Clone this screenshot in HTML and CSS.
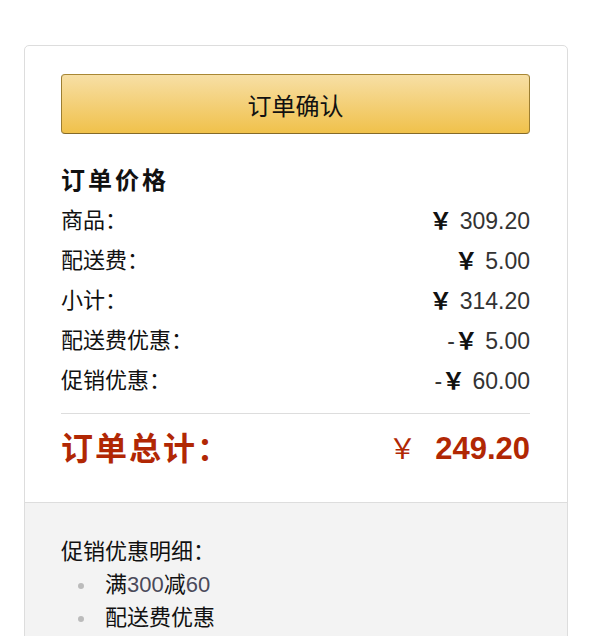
FILE: index.html
```html
<!DOCTYPE html>
<html lang="zh-CN">
<head>
    <meta charset="UTF-8">
    <meta name="viewport" content="width=device-width, initial-scale=1.0">
    <title>订单确认</title>
    <link rel="stylesheet" href="styles.css">
</head>
<body>

    <div class="page">
        <div class="summary">
            <div class="summary-main">
                <button class="confirm-btn">订单确认</button>

                <h3 class="summary-title">订单价格</h3>
                <ul class="price-list">
                    <li><span>商品：</span><span class="amount"><span class="yen">￥</span> 309.20</span></li>
                    <li><span>配送费：</span><span class="amount"><span class="yen">￥</span> 5.00</span></li>
                    <li><span>小计：</span><span class="amount"><span class="yen">￥</span> 314.20</span></li>
                    <li><span>配送费优惠：</span><span class="amount">-<span class="yen">￥</span> 5.00</span></li>
                    <li><span>促销优惠：</span><span class="amount">-<span class="yen">￥</span> 60.00</span></li>
                </ul>

                <div class="grand-total">
                    <span class="total-label">订单总计：</span>
                    <span class="total-amount"><span class="yen">￥</span> 249.20</span>
                </div>
            </div>

            <div class="promo">
                <div class="promo-title">促销优惠明细：</div>
                <ul class="promo-list">
                    <li>满<span class="num">300</span>减<span class="num">60</span></li>
                    <li>配送费优惠</li>
                </ul>
            </div>
        </div>
    </div>

</body>
</html>
```

FILE: styles.css
```css
body {
    font-family: "Liberation Sans", "Noto Sans CJK SC", sans-serif;
    background-color: #fff;
    color: #111;
    margin: 0;
}

.page {
    padding: 45px 0 0 24px;
}

.summary {
    width: 544px;
    box-sizing: border-box;
    border: 1px solid #ddd;
    border-radius: 5px;
    overflow: hidden;
}

.summary-main {
    padding: 28px 37px 32px 36px;
}

.confirm-btn {
    display: block;
    width: 100%;
    height: 60px;
    box-sizing: border-box;
    font-family: inherit;
    font-size: 24px;
    color: #111;
    background: linear-gradient(to bottom, #f7dfa5, #f0c14b);
    border: 1px solid;
    border-color: #a88734 #9c7e31 #846a29;
    border-radius: 4px;
    cursor: pointer;
}

.summary-title {
    margin: 30px 0 0;
    font-size: 24px;
    line-height: 34px;
    letter-spacing: 3px;
    font-weight: bold;
}

.price-list {
    list-style: none;
    margin: 3px 0 0;
    padding: 0 0 12px;
    border-bottom: 1px solid #ddd;
}

.price-list li {
    display: flex;
    justify-content: space-between;
    font-size: 22px;
    line-height: 40px;
}

.amount {
    color: #333;
    font-size: 23px;
}

.amount .yen {
    color: #111;
    font-weight: bold;
    margin-right: 1px;
}

.grand-total {
    display: flex;
    justify-content: space-between;
    margin-top: 15px;
    line-height: 40px;
    color: #b12704;
    font-size: 32px;
    font-weight: bold;
}

.total-label {
    letter-spacing: 2px;
}

.total-amount {
    font-size: 31px;
}

.total-amount .yen {
    font-size: 28px;
    font-weight: normal;
    margin-right: 10px;
}

.promo {
    background-color: #f3f3f3;
    border-top: 1px solid #ddd;
    padding: 33px 36px 20px;
    font-size: 22px;
}

.promo-title {
    line-height: 32px;
}

.promo-list {
    list-style: none;
    margin: 0;
    padding-left: 17px;
    line-height: 33px;
}

.promo-list li::before {
    content: "";
    display: inline-block;
    width: 6px;
    height: 6px;
    margin-right: 21px;
    border-radius: 50%;
    background-color: #bbb;
    vertical-align: middle;
}

.promo-list .num {
    color: #4a4a5a;
}
```
